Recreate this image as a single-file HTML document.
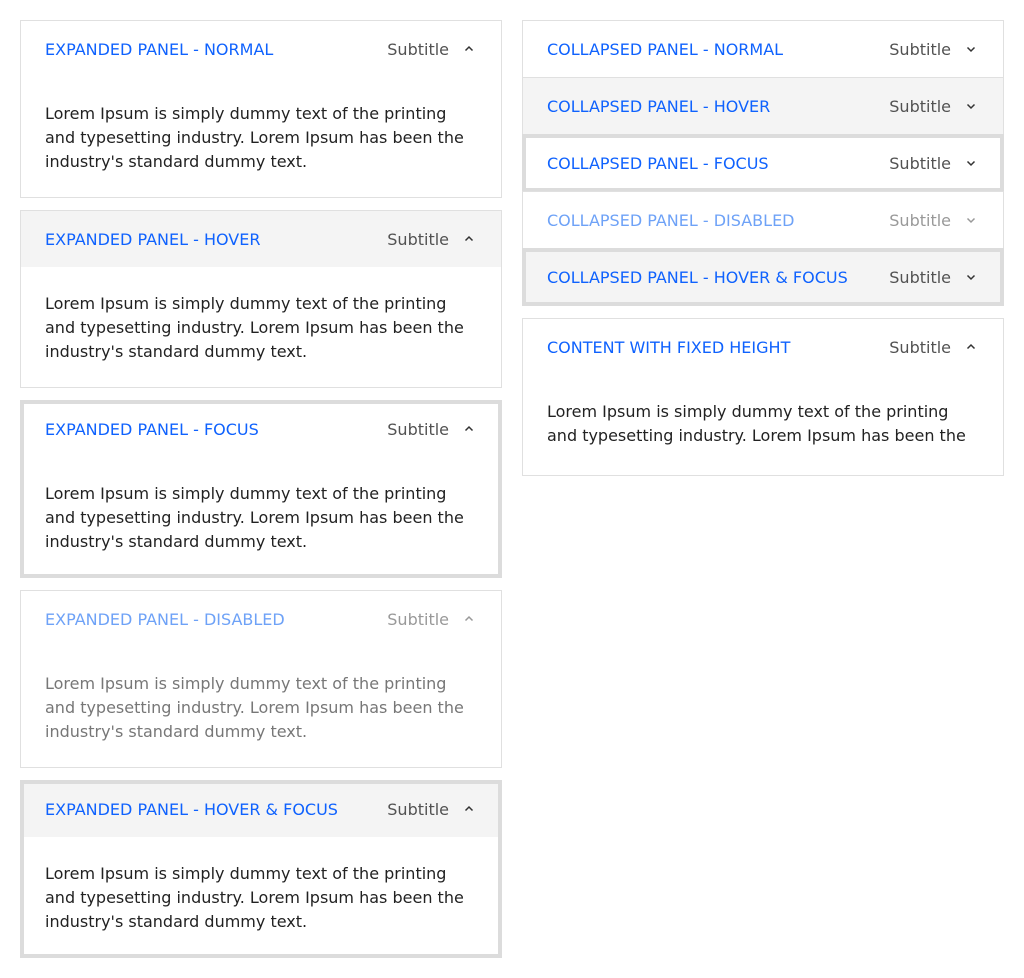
<!DOCTYPE html>
<html><head><style>
*{box-sizing:border-box;margin:0;padding:0}
body{width:1024px;height:978px;background:#fff;font-family:"DejaVu Sans","Liberation Sans",sans-serif;font-size:16px;position:relative}
.col{position:absolute;top:20px;width:482px}
.p{border:1px solid #e0e0e0;position:relative;background:#fff}
.l .p{margin-bottom:12px}
.h{height:56px;display:flex;align-items:center;padding:0 24px;color:#0f62fe}
.h .t{flex:1}
.h .s{color:#525252;margin-right:12px}
.h svg{width:16px;height:16px}
.c{padding:25px 24px 23px;color:#222;line-height:24px}
.hov .h{background:#f4f4f4}
.foc::after{content:"";position:absolute;inset:-1px;border:4px solid #dcdcdc;pointer-events:none}
.dis .h{color:#6ea2f7}.dis .h .s{color:#999}.dis .c{color:#777}
.r .p{margin-top:-1px}
.r .p:first-child{margin-top:0}
</style></head><body>
<div class="col l" style="left:20px">
 <div class="p"><div class="h"><span class="t">EXPANDED PANEL - NORMAL</span><span class="s">Subtitle</span><svg viewBox="0 0 16 16"><path d="M4.5 9.5l3.5-3.5 3.5 3.5" fill="none" stroke="#333" stroke-width="1.5"/></svg></div><div class="c">Lorem Ipsum is simply dummy text of the printing and typesetting industry. Lorem Ipsum has been the industry's standard dummy text.</div></div>
 <div class="p hov"><div class="h"><span class="t">EXPANDED PANEL - HOVER</span><span class="s">Subtitle</span><svg viewBox="0 0 16 16"><path d="M4.5 9.5l3.5-3.5 3.5 3.5" fill="none" stroke="#333" stroke-width="1.5"/></svg></div><div class="c">Lorem Ipsum is simply dummy text of the printing and typesetting industry. Lorem Ipsum has been the industry's standard dummy text.</div></div>
 <div class="p foc"><div class="h"><span class="t">EXPANDED PANEL - FOCUS</span><span class="s">Subtitle</span><svg viewBox="0 0 16 16"><path d="M4.5 9.5l3.5-3.5 3.5 3.5" fill="none" stroke="#333" stroke-width="1.5"/></svg></div><div class="c">Lorem Ipsum is simply dummy text of the printing and typesetting industry. Lorem Ipsum has been the industry's standard dummy text.</div></div>
 <div class="p dis"><div class="h"><span class="t">EXPANDED PANEL - DISABLED</span><span class="s">Subtitle</span><svg viewBox="0 0 16 16"><path d="M4.5 9.5l3.5-3.5 3.5 3.5" fill="none" stroke="#999" stroke-width="1.5"/></svg></div><div class="c">Lorem Ipsum is simply dummy text of the printing and typesetting industry. Lorem Ipsum has been the industry's standard dummy text.</div></div>
 <div class="p hov foc"><div class="h"><span class="t">EXPANDED PANEL - HOVER &amp; FOCUS</span><span class="s">Subtitle</span><svg viewBox="0 0 16 16"><path d="M4.5 9.5l3.5-3.5 3.5 3.5" fill="none" stroke="#333" stroke-width="1.5"/></svg></div><div class="c">Lorem Ipsum is simply dummy text of the printing and typesetting industry. Lorem Ipsum has been the industry's standard dummy text.</div></div>
</div>
<div class="col r" style="left:522px">
 <div class="p"><div class="h"><span class="t">COLLAPSED PANEL - NORMAL</span><span class="s">Subtitle</span><svg viewBox="0 0 16 16"><path d="M4.5 6.5l3.5 3.5 3.5-3.5" fill="none" stroke="#333" stroke-width="1.5"/></svg></div></div>
 <div class="p hov"><div class="h"><span class="t">COLLAPSED PANEL - HOVER</span><span class="s">Subtitle</span><svg viewBox="0 0 16 16"><path d="M4.5 6.5l3.5 3.5 3.5-3.5" fill="none" stroke="#333" stroke-width="1.5"/></svg></div></div>
 <div class="p foc"><div class="h"><span class="t">COLLAPSED PANEL - FOCUS</span><span class="s">Subtitle</span><svg viewBox="0 0 16 16"><path d="M4.5 6.5l3.5 3.5 3.5-3.5" fill="none" stroke="#333" stroke-width="1.5"/></svg></div></div>
 <div class="p dis"><div class="h"><span class="t">COLLAPSED PANEL - DISABLED</span><span class="s">Subtitle</span><svg viewBox="0 0 16 16"><path d="M4.5 6.5l3.5 3.5 3.5-3.5" fill="none" stroke="#999" stroke-width="1.5"/></svg></div></div>
 <div class="p hov foc"><div class="h"><span class="t">COLLAPSED PANEL - HOVER &amp; FOCUS</span><span class="s">Subtitle</span><svg viewBox="0 0 16 16"><path d="M4.5 6.5l3.5 3.5 3.5-3.5" fill="none" stroke="#333" stroke-width="1.5"/></svg></div></div>
 <div class="p" style="margin-top:12px"><div class="h"><span class="t">CONTENT WITH FIXED HEIGHT</span><span class="s">Subtitle</span><svg viewBox="0 0 16 16"><path d="M4.5 9.5l3.5-3.5 3.5 3.5" fill="none" stroke="#333" stroke-width="1.5"/></svg></div><div class="c" style="padding-bottom:27px"><div style="height:48px;overflow:hidden">Lorem Ipsum is simply dummy text of the printing and typesetting industry. Lorem Ipsum has been the industry's standard dummy text.</div></div></div>
</div>
</body></html>
